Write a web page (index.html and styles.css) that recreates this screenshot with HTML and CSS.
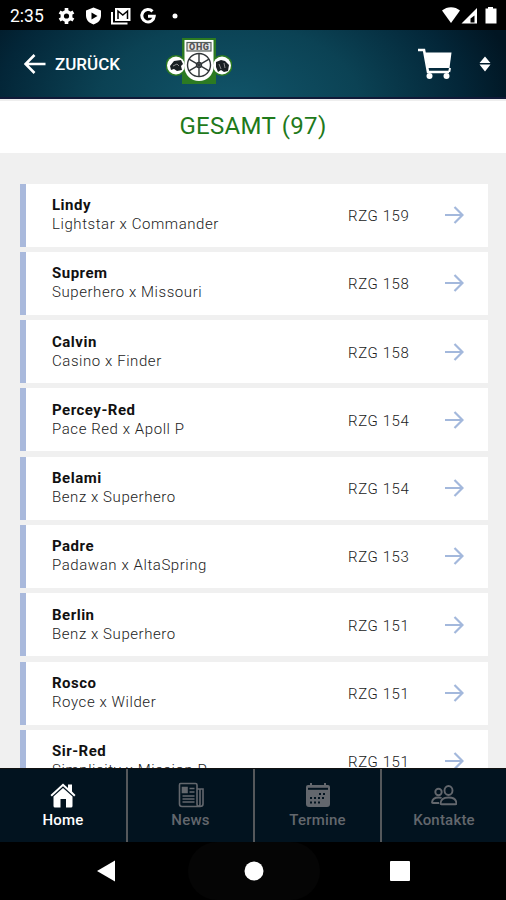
FILE: index.html
```
<!DOCTYPE html>
<html lang="de">
<head>
    <meta charset="UTF-8">
    <meta name="viewport" content="width=device-width, initial-scale=1.0">
    <title>Gesamt</title>
    <link rel="stylesheet" href="styles.css">
</head>
<body>
    <svg class="sprite">
        <symbol id="arrow" viewBox="0 0 20 20">
            <path d="M1 10h17M10.500 2l8 8-8 8" fill="none" stroke="currentColor" stroke-width="2.200"/>
        </symbol>
    </svg>

    <div class="statusbar">
        <span class="time">2:35</span>
        <svg class="status-left" viewBox="0 0 124 20" width="124" height="20">
            <!-- settings -->
            <circle cx="9.500" cy="10" r="4.300" fill="none" stroke="#fff" stroke-width="3.400"/>
            <path d="M9.500 2v16M2.600 6l13.800 8M16.400 6L2.600 14" stroke="#fff" stroke-width="3.600" fill="none"/>
            <circle cx="9.500" cy="10" r="2.600" fill="#000"/>
            <!-- shield -->
            <path d="M36.500 1.500l7.500 3v5c0 4.500-3 7.500-7.500 9-4.500-1.500-7.500-4.500-7.500-9v-5z" fill="#fff"/>
            <path d="M34.500 6.500l6 3.500-6 3.500z" fill="#000"/>
            <!-- mail -->
            <path d="M55 6v11.500h15.500" fill="none" stroke="#fff" stroke-width="2"/>
            <path d="M58 2h15.500v13H58z" fill="#fff"/>
            <path d="M61 13V5l4.800 4L70.500 5v8" fill="none" stroke="#000" stroke-width="1.500"/>
            <!-- google -->
            <path d="M95.500 5.400A6.200 6.200 0 1 0 97.200 10.300H91" fill="none" stroke="#fff" stroke-width="3"/>
            <circle cx="118" cy="10" r="2.500" fill="#fff"/>
        </svg>
        <svg class="status-right" viewBox="0 0 58 18" width="58" height="18">
            <path d="M1 4.500C6 0 14 0 19 4.500L10 17z" fill="#fff"/>
            <path d="M36 2v15.500H20.500z" fill="#fff"/>
            <path d="M33.500 9.500v7h-4v-4z" fill="#000"/>
            <path d="M47 1h5v1.500h3.500v15H44.500v-15H47z" fill="#fff"/>
        </svg>
    </div>

    <header class="header">
        <a class="back" href="#">
            <svg viewBox="0 0 22 20" width="22" height="20"><path d="M21.500 10H2M10.500 1L1.500 10l9 9" fill="none" stroke="#fff" stroke-width="2.600"/></svg>
            <span>ZURÜCK</span>
        </a>
        <svg class="logo" viewBox="0 0 66 48" width="66" height="48">
            <path d="M16 1h34v46H16z" fill="#2c7a22"/>
            <circle cx="10" cy="28.500" r="10.500" fill="#2c7a22"/>
            <circle cx="56" cy="28.500" r="10.500" fill="#2c7a22"/>
            <path d="M18.500 3h29v27a14.500 14 0 0 1-29 0z" fill="#fff"/>
            <circle cx="10" cy="28.500" r="9" fill="#fff"/>
            <circle cx="56" cy="28.500" r="9" fill="#fff"/>
            <path d="M4 29l4-5 7-1 2 4-2 2 1 4-5 1-3-2-3 1zM50 25l5-2 4 1 4 4-1 6-4 1-3-2-3 2-2-5z" fill="#192022"/>
            <path d="M7 29l4-2 2 2M53 27l2 5m3-6l1 5" fill="none" stroke="#aaa" stroke-width=".8"/>
            <rect x="21" y="5.500" width="24" height="8.500" fill="#e8e8e8" stroke="#55605c" stroke-width="1.200"/>
            <text class="logo-text" x="33" y="13" text-anchor="middle" textLength="20">OHG</text>
            <g fill="none" stroke="#303538" stroke-width="1.400">
                <circle cx="33" cy="28" r="11.500"/>
                <circle cx="33" cy="28" r="2.500"/>
                <path d="M33 16.500v23M23 22.200l20 11.600M43 22.200L23 33.800"/>
            </g>
        </svg>
        <svg class="cart" viewBox="0 0 36 32" width="36" height="32">
            <path d="M1 2h6l4 22h21" fill="none" stroke="#fff" stroke-width="2.600"/>
            <path d="M8 4.500h26.500L32.500 20H11z" fill="#fff"/>
            <path d="M33 20l-.8 4" stroke="#fff" stroke-width="2"/>
            <circle cx="12.500" cy="28" r="3" fill="#fff"/>
            <circle cx="29.500" cy="28" r="3" fill="#fff"/>
        </svg>
        <svg class="sort" viewBox="0 0 12 16" width="12" height="16"><path d="M.5 7L6 .5 11.500 7zM.5 8.500L6 15.500 11.500 8.500z" fill="#fff"/></svg>
    </header>

    <h1 class="title">GESAMT (97)</h1>

    <main class="list">
        <div class="card">
            <div class="info"><b>Lindy</b><span>Lightstar x Commander</span></div>
            <div class="rzg">RZG 159</div>
            <svg class="arrow"><use href="#arrow"/></svg>
        </div>
        <div class="card">
            <div class="info"><b>Suprem</b><span>Superhero x Missouri</span></div>
            <div class="rzg">RZG 158</div>
            <svg class="arrow"><use href="#arrow"/></svg>
        </div>
        <div class="card">
            <div class="info"><b>Calvin</b><span>Casino x Finder</span></div>
            <div class="rzg">RZG 158</div>
            <svg class="arrow"><use href="#arrow"/></svg>
        </div>
        <div class="card">
            <div class="info"><b>Percey-Red</b><span>Pace Red x Apoll P</span></div>
            <div class="rzg">RZG 154</div>
            <svg class="arrow"><use href="#arrow"/></svg>
        </div>
        <div class="card">
            <div class="info"><b>Belami</b><span>Benz x Superhero</span></div>
            <div class="rzg">RZG 154</div>
            <svg class="arrow"><use href="#arrow"/></svg>
        </div>
        <div class="card">
            <div class="info"><b>Padre</b><span>Padawan x AltaSpring</span></div>
            <div class="rzg">RZG 153</div>
            <svg class="arrow"><use href="#arrow"/></svg>
        </div>
        <div class="card">
            <div class="info"><b>Berlin</b><span>Benz x Superhero</span></div>
            <div class="rzg">RZG 151</div>
            <svg class="arrow"><use href="#arrow"/></svg>
        </div>
        <div class="card">
            <div class="info"><b>Rosco</b><span>Royce x Wilder</span></div>
            <div class="rzg">RZG 151</div>
            <svg class="arrow"><use href="#arrow"/></svg>
        </div>
        <div class="card">
            <div class="info"><b>Sir-Red</b><span>Simplicity x Mission P</span></div>
            <div class="rzg">RZG 151</div>
            <svg class="arrow"><use href="#arrow"/></svg>
        </div>
    </main>

    <nav class="tabs">
        <a class="tab active" href="#">
            <svg viewBox="0 0 26 26" width="26" height="26">
                <path d="M.5 13L13 1.500l5 4.500V2.500h4V9.500l3.500 3.500-1.300 1.500L13 4.300 1.800 14.500z" fill="currentColor"/>
                <path d="M3.500 14.500L13 6l9.500 8.500V24q0 1.500-1.500 1.500h-5V17h-5.500v8.500H5q-1.500 0-1.500-1.500z" fill="currentColor"/>
            </svg>
            <span>Home</span>
        </a>
        <a class="tab" href="#">
            <svg viewBox="0 0 26 26" width="26" height="26" fill="none" stroke="currentColor" stroke-width="1.600">
                <path d="M19 22V3q0-1.500-1.500-1.500h-15Q1.500 1.500 1.500 3v19q0 2.500 2.500 2.500h18q3 0 3-2.500V7h-6M22 7v15q0 2-1.500 2T19 22"/>
                <path d="M11.500 6.500h5M11.500 10h5M4.500 14h12M4.500 17h12M4.500 20h12"/>
                <path d="M4.500 5.500h4.500v5H4.500z" fill="currentColor"/>
            </svg>
            <span>News</span>
        </a>
        <a class="tab" href="#">
            <svg viewBox="0 0 26 26" width="26" height="26">
                <path d="M1 5q0-2 2-2h2V1h2v2h12V1h2v2h2q2 0 2 2v17q0 3-3 3H4q-3 0-3-3z" fill="currentColor"/>
                <path d="M3 6.800h20" stroke="#02131f" stroke-width="2"/>
                <path d="M14 12h2m2 0h2M5 16h2m2 0h2m2 0h2m2 0h2M5 20.500h2m2 0h2m2 0h2" stroke="#02131f" stroke-width="2"/>
            </svg>
            <span>Termine</span>
        </a>
        <a class="tab" href="#">
            <svg viewBox="0 0 26 26" width="26" height="26" fill="none" stroke="currentColor" stroke-width="1.900">
                <ellipse cx="17.500" cy="8.500" rx="4" ry="4.500"/>
                <circle cx="7.500" cy="10" r="3.200"/>
                <path d="M9.500 21.500q.3-6 8-6t8 6q0 .8-1 .8h-14q-1 0-1-.8zM10.500 16q-1-.5-3-.5-6 0-6.500 4.800 0 .7 1 .7h6"/>
            </svg>
            <span>Kontakte</span>
        </a>
    </nav>

    <div class="navbar">
        <svg viewBox="0 0 20 22" width="20" height="22"><path d="M1 11L19 .5v21z" fill="#fff"/></svg>
        <div class="home-key"><svg viewBox="0 0 20 20" width="20" height="20"><circle cx="10" cy="10" r="9.500" fill="#fff"/></svg></div>
        <svg viewBox="0 0 20 20" width="20" height="20"><rect width="20" height="20" rx="1" fill="#fff"/></svg>
    </div>
</body>
</html>
```
FILE: styles.css
```
* {
    box-sizing: border-box;
}
body {
    margin: 0;
    height: 900px;
    display: flex;
    flex-direction: column;
    overflow: hidden;
    background-color: #f0f0f0;
    font-family: Roboto, sans-serif;
    color: #222;
}
a {
    color: inherit;
    text-decoration: none;
}
svg {
    display: block;
    flex: none;
}
.sprite {
    width: 0;
    height: 0;
    position: absolute;
}
.statusbar {
    height: 30px;
    flex: none;
    display: flex;
    align-items: center;
    padding: 0 7px 0 10px;
    background-color: #000;
    color: #fff;
}
.time {
    width: 47px;
    font-size: 17.500px;
    line-height: 20px;
    padding-top: 2px;
}
.status-left {
    margin-top: 1px;
}
.status-right {
    margin-left: auto;
}
.header {
    height: 69px;
    flex: none;
    display: flex;
    align-items: center;
    padding: 0 15px 0 24px;
    background: radial-gradient(ellipse 290px 180px at 230px 75px, #11556a 0%, #0b4254 45%, #032638 80%, #011522 100%);
    border-bottom: 2px solid #101a38;
    color: #fff;
}
.back {
    width: 142px;
    display: flex;
    align-items: center;
    gap: 9px;
    padding-top: 1px;
    font-size: 17px;
    font-weight: 500;
}
.logo {
    margin-top: -5px;
}
.logo-text {
    font-size: 9px;
    font-weight: 900;
    fill: #555;
}
.cart {
    margin-left: auto;
}
.sort {
    margin-left: 26px;
}
.title {
    height: 54px;
    flex: none;
    margin: 0;
    background-color: #fff;
    border-top: 2px solid #eee;
    color: #1f7a1b;
    font-size: 24px;
    font-weight: 400;
    letter-spacing: .3px;
    line-height: 51px;
    text-align: center;
}
.list {
    height: 615px;
    flex: none;
    overflow: hidden;
    padding: 30.500px 18px 0 20px;
}
.card {
    height: 63px;
    margin-bottom: 5.300px;
    display: flex;
    align-items: center;
    padding-right: 24px;
    background-color: #fff;
    border-left: 6px solid #a9b9dc;
}
.info {
    width: 296px;
    padding-left: 26px;
    font-size: 15px;
    line-height: 19px;
    letter-spacing: .5px;
}
.info b,
.info span {
    display: block;
}
.info b {
    color: #111;
}
.info span {
    letter-spacing: .57px;
}
.info span,
.rzg {
    font-weight: 300;
}
.rzg {
    padding-left: 26px;
    padding-top: 2px;
    font-size: 15px;
    letter-spacing: .6px;
}
.arrow {
    width: 20px;
    height: 20px;
    margin-left: auto;
    color: #a3b8dc;
}
.tabs {
    height: 74px;
    flex: none;
    display: grid;
    grid-template-columns: 128px 127px 127px 1fr;
    background-color: #02131f;
    border-top: 1px solid #111;
}
.tab {
    display: flex;
    flex-direction: column;
    align-items: center;
    padding-top: 13px;
    border-right: 2px solid #55585b;
    color: #63676d;
    font-size: 15px;
    font-weight: 500;
    letter-spacing: .2px;
    line-height: 24px;
}
.tab:last-child {
    border-right: 0;
}
.tab.active {
    color: #fff;
}
.navbar {
    height: 58px;
    flex: none;
    display: flex;
    align-items: center;
    justify-content: center;
    background-color: #000;
}
.home-key {
    width: 132px;
    height: 58px;
    margin: 0 70px 0 72px;
    display: flex;
    align-items: center;
    justify-content: center;
    border-radius: 29px;
    background-color: #050505;
}
```
